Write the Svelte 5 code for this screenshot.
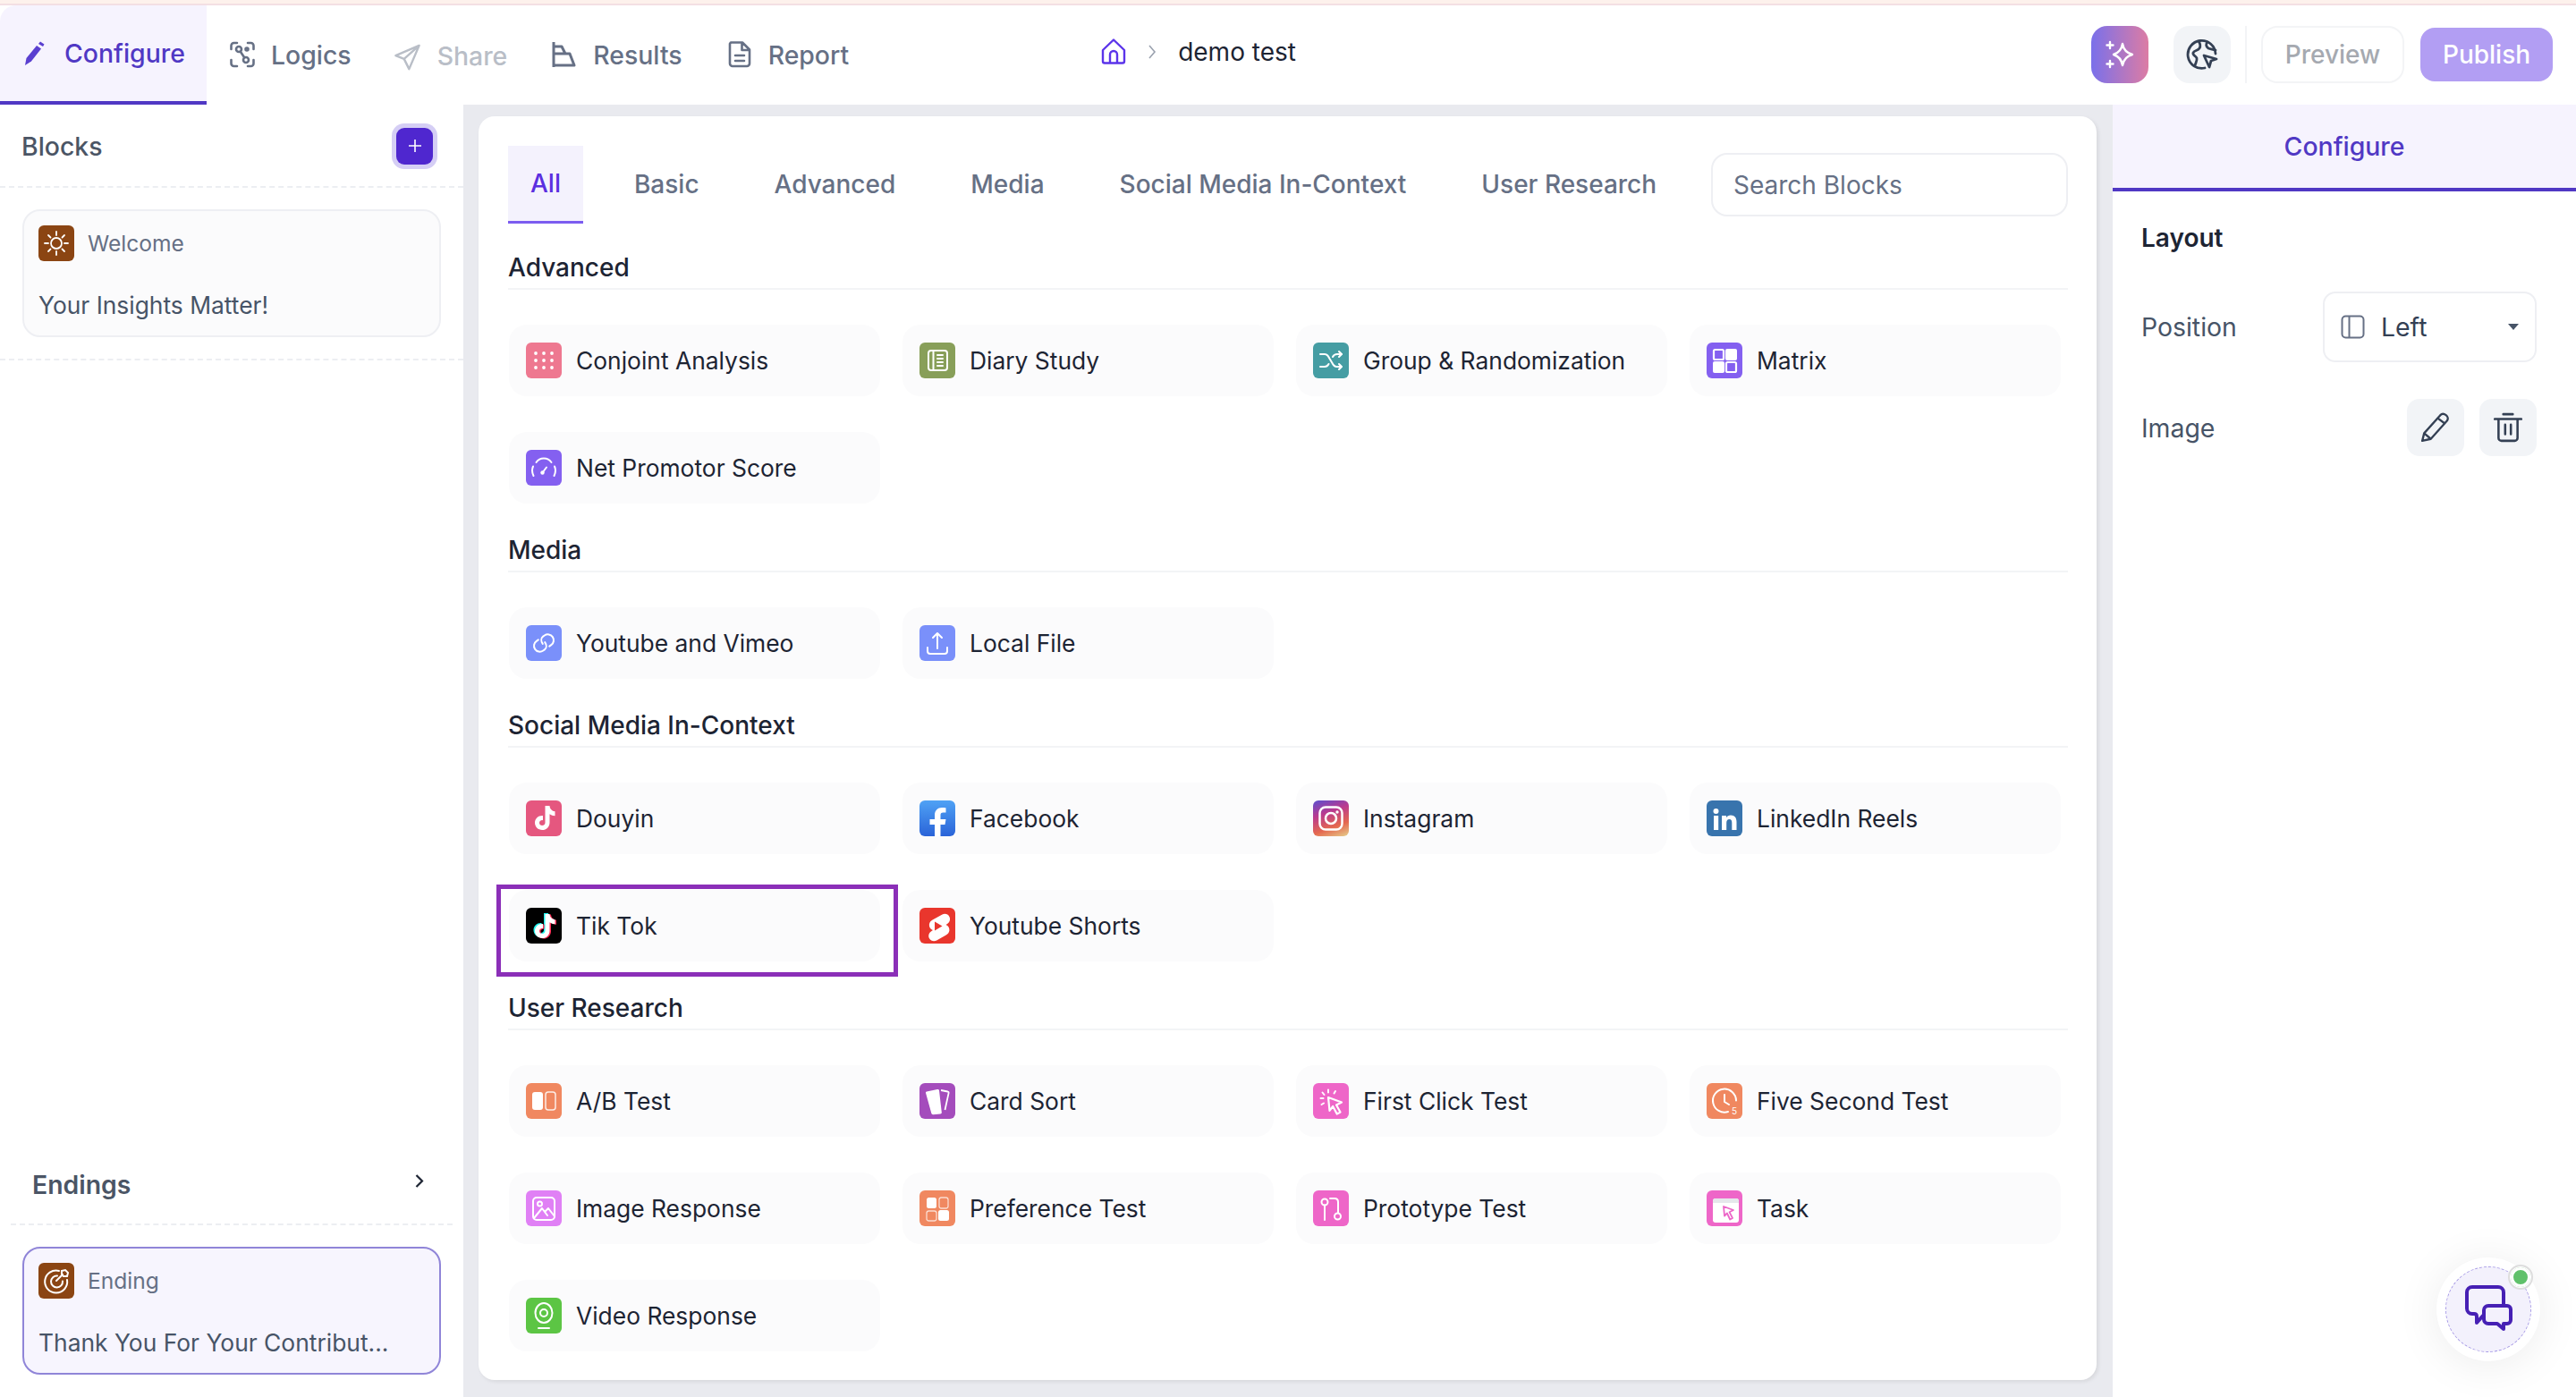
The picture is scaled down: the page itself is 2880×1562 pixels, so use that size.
<script>
  const W = 'stroke="#fff" fill="none" stroke-width="2" stroke-linecap="round" stroke-linejoin="round"';
  const note = (c, t = '') => `<path fill="${c}" ${t} d="M21.500 7h5c.3 3.600 2.600 5.900 6 6.300v4.900c-2.300 0-4.300-.7-6-1.900v9.400c0 4.700-3.700 8.300-8.300 8.300-4.500 0-8.200-3.600-8.200-8 0-4.700 4.100-8.400 9-7.900v5.100c-2.200-.5-4 1-4 2.900 0 1.700 1.400 3 3.100 3 1.800 0 3.300-1.300 3.400-3.100z" />`;
  const cursor = (x, y, c = '#fff') => `<path transform="translate(${x} ${y})" d="M0 0l11 4-4.500 2.200L10 13l-2.800 1.500-3.300-7L1 10.500z" fill="none" stroke="${c}" stroke-width="1.800" stroke-linejoin="round" />`;

  const glyphs = {
    conjoint: [11, 20, 29].flatMap((x) => [12, 20, 28].map((y) => `<circle cx="${x}" cy="${y}" r="1.900" fill="#fff" />`)).join(''),
    diary: `<g ${W}><rect x="10" y="9" width="21" height="22" rx="3" /><path d="M15.500 9v22M20 14h6M20 18h6M20 22h6M20 26h6" /></g>`,
    group: `<g ${W}><path d="M8 13h5c3 0 4 2 5.500 5l3 5c1.500 3 2.500 4 5 4h5M8 27h5c2 0 3.500-1 4.500-3M22 16c1-2 2.500-3 5-3h5" /><path d="M29 10l3 3-3 3M29 24l3 3-3 3" /></g>`,
    matrix: `<rect x="8" y="8" width="11" height="11" rx="1.500" fill="none" stroke="#fff" stroke-width="2.200" /><rect x="21" y="7" width="13" height="13" rx="2" fill="#fff" /><rect x="7" y="21" width="13" height="13" rx="2" fill="#fff" /><rect x="22" y="22" width="11" height="11" rx="1.500" fill="none" stroke="#fff" stroke-width="2.200" />`,
    nps: `<g ${W} stroke-width="2.500"><path d="M11.500 14c2-3 5-4.500 8.500-4.500s6.500 1.500 8.500 4.500" /><path d="M8.500 29c-1-2-1.500-4-1.500-6 0-1.500.3-3 1-4.500M31.500 29c1-2 1.500-4 1.500-6 0-1.500-.3-3-1-4.500" /><path d="M18.500 25.500l4.500-6" /></g><circle cx="18.500" cy="25.500" r="2.200" fill="#fff" />`,
    link: `<g ${W} stroke-width="2.200" transform="rotate(-35 20 20)"><path d="M17 13.500h-2.500a6.500 6.500 0 0 0 0 13h2c3 0 5-3 5-6.500" /><path d="M23 26.500h2.500a6.500 6.500 0 0 0 0-13h-2c-3 0-5 3-5 6.500" /></g>`,
    upload: `<g ${W} stroke-width="2.200"><path d="M20 26V9M15 14l5-5 5 5" /><path d="M9 25v4a3 3 0 0 0 3 3h16a3 3 0 0 0 3-3v-4" /></g>`,
    douyin: note('#fff', 'transform="translate(0 -1)"'),
    facebook: `<path fill="#fff" d="M17 40V27h-5.500v-6H17v-4.500C17 11 20.500 8 25 8c2 0 3.800.2 4.500.3v5.300h-3c-2.300 0-3 1.200-3 3V21h6l-1 6h-5v13z" />`,
    instagram: `<g fill="none" stroke="#fff"><rect x="7.500" y="7.500" width="25" height="25" rx="6.500" stroke-width="2.500" /><circle cx="20" cy="20" r="6" stroke-width="2.500" /></g><circle cx="27" cy="13" r="1.700" fill="#fff" />`,
    linkedin: `<circle cx="10.500" cy="12" r="3" fill="#fff" /><path fill="#fff" d="M8 17h5.200v16H8zM17 17h5v2.300c1-1.600 2.700-2.700 5-2.700 4.500 0 6.500 2.900 6.500 7.500V33h-5.200v-8c0-2.300-.8-3.900-2.900-3.900-2.300 0-3.200 1.700-3.200 4V33H17z" />`,
    tiktok: note('#25f4ee', 'transform="translate(-1.500 -1)"') + note('#fe2c55', 'transform="translate(1.500 .5)"') + note('#fff'),
    shorts: `<path fill="#fff" d="M25.500 7.500c3-1.500 6.500-.4 7.900 2.400 1.400 2.700.5 6-2 7.800l-1.900 1.200c2.600 1 4.300 3.700 3.900 6.600-.3 2.200-1.700 4-3.700 5l-10.500 6c-3 1.600-6.700.6-8.200-2.300-1.500-2.700-.6-6 1.900-7.800l2-1.300c-2.700-1-4.400-3.700-4-6.600.3-2.200 1.700-4 3.700-5z" /><path fill="#e9362d" d="M17 15.500l8.500 5-8.500 5z" />`,
    ab: `<rect x="7" y="10" width="12" height="20" rx="3" fill="#fff" /><rect x="22" y="10" width="11" height="20" rx="3" fill="none" stroke="#fff" stroke-width="1.500" opacity=".85" />`,
    cards: `<path fill="#fff" d="M8 9.500l12-2.500c1-.2 1.700.3 2 1.200l2.800 24.500c.1 1-.5 1.700-1.500 1.800l-8 .7c-1 .1-1.800-.5-2-1.400L7 11c-.2-.7.300-1.300 1-1.500z" /><path fill="none" stroke="#fff" stroke-width="1.800" d="M24 8l7.500 1.500c.8.200 1.300.8 1.100 1.600L28.500 30" />`,
    click: `<g ${W} stroke-width="1.800"><path d="M17 7.500v3M10.500 10.500l2 2.500M25 9l-1.500 2.500M8.500 17h3M9.500 24l2.500-1.500" /></g><path d="M17 16l15 5.500-6 3 4.500 8-3.800 2-4.500-8.500-3.700 4.800z" fill="none" stroke="#fff" stroke-width="2.200" stroke-linejoin="round" />`,
    clock: `<g ${W} stroke-width="2.200"><path d="M24 32a13 13 0 1 1 9-12.500" /><path d="M20 13v8l5 3" /></g><text x="28" y="35" font-size="10" font-family="Inter, sans-serif" fill="#fff">5</text>`,
    image: `<g ${W} stroke-width="1.800"><rect x="8" y="8" width="24" height="25" rx="4" /><circle cx="15.500" cy="15" r="2.500" /><path d="M9 31l9-11 6 8M21 24l4-4 7 9" /></g>`,
    pref: `<rect x="8" y="8" width="11" height="12" rx="2.500" fill="#fff" /><rect x="22" y="8" width="10" height="12" rx="2.500" fill="none" stroke="#fff" stroke-width="1.300" opacity=".7" /><rect x="8" y="23" width="11" height="11" rx="2.500" fill="none" stroke="#fff" stroke-width="1.300" opacity=".7" /><rect x="21" y="22" width="12" height="12" rx="2.500" fill="#fff" />`,
    proto: `<g ${W} stroke-width="2.200"><circle cx="13" cy="13" r="3.500" /><path d="M13 16.500V33M19 9h5c3 0 4 1.500 4 4v12" /><circle cx="27.500" cy="29" r="3.500" /></g>`,
    task: `<rect x="7" y="9" width="29" height="27" rx="3" fill="#fff" /><path d="M7 14v-2a3 3 0 0 1 3-3h23a3 3 0 0 1 3 3v2z" fill="#e5e7eb" />` + cursor(19, 18, '#ec66c8'),
    video: `<g ${W} stroke-width="2.200"><ellipse cx="20" cy="17" rx="9.500" ry="11" /><circle cx="20" cy="17" r="4" /><path d="M14 34h12" /></g>`,
  };

  const sections = [
    { title: 'Advanced', items: [
      ['Conjoint Analysis', 'conjoint', '#ee7890'], ['Diary Study', 'diary', '#889f59'],
      ['Group & Randomization', 'group', '#459da3'], ['Matrix', 'matrix', '#8460f0'],
      ['Net Promotor Score', 'nps', '#8460f0'] ] },
    { title: 'Media', items: [ ['Youtube and Vimeo', 'link', '#7a90fa'], ['Local File', 'upload', '#7a90fa'] ] },
    { title: 'Social Media In-Context', items: [
      ['Douyin', 'douyin', '#e5577f'], ['Facebook', 'facebook', 'linear-gradient(#4fa2f5, #2a63d8)'],
      ['Instagram', 'instagram', 'linear-gradient(160deg, #5a4fd0 0%, #b93a90 35%, #e5684f 70%, #e5cf8c 100%)'], ['LinkedIn Reels', 'linkedin', '#3874ad'],
      ['Tik Tok', 'tiktok', '#000'], ['Youtube Shorts', 'shorts', '#e9362d'] ] },
    { title: 'User Research', items: [
      ['A/B Test', 'ab', '#f08860'], ['Card Sort', 'cards', '#a44cbc'],
      ['First Click Test', 'click', '#ee66c8'], ['Five Second Test', 'clock', '#f08860'],
      ['Image Response', 'image', '#e080f5'], ['Preference Test', 'pref', '#f08860'],
      ['Prototype Test', 'proto', '#ee66c8'], ['Task', 'task', '#ee66c8'],
      ['Video Response', 'video', '#5cc544'] ] },
  ];

  const innerTabs = ['All', 'Basic', 'Advanced', 'Media', 'Social Media In-Context', 'User Research'];
</script>

<div class="page">
  <div class="topline"></div>

  <header class="topbar">
    <nav class="main-tabs">
      <div class="main-tab active">
        <svg class="tab-ico" viewBox="0 0 28 28"><path d="M2 27l1.500-8L15 5l5 3.500L9 22.500z" fill="#5a3fd0" /><path d="M17 3l2-2.500 4.500 3L22 6z" fill="#5a3fd0" /></svg>
        Configure
      </div>
      <div class="main-tab">
        <svg class="tab-ico" viewBox="0 0 28 28" fill="none" stroke="#667085" stroke-width="2.600" stroke-linecap="round"><path d="M1.500 8V4a3 3 0 0 1 3-3H8M20 1h3.500a3 3 0 0 1 3 3v4M1.500 20v4a3 3 0 0 0 3 3H8M26.500 20v4a3 3 0 0 1-3 3H20" /><circle cx="10" cy="8" r="3" /><circle cx="18" cy="20" r="3" /><circle cx="19" cy="8" r="1.500" /><path d="M12 11l4 6" /></svg>
        Logics
      </div>
      <div class="main-tab off">
        <svg class="tab-ico wide" viewBox="0 0 32 32" fill="none" stroke="#b9bec7" stroke-width="2.600" stroke-linejoin="round"><path d="M30 2L2 14l10 4 6 12zM30 2L12 18" /></svg>
        Share
      </div>
      <div class="main-tab">
        <svg class="tab-ico" viewBox="0 0 28 28" fill="none" stroke="#667085" stroke-width="3" stroke-linejoin="round"><path d="M2 0v28" /><path d="M2 5h9l4 8H2M2 13h18l5 13H2" /></svg>
        Results
      </div>
      <div class="main-tab">
        <svg class="tab-ico" viewBox="0 0 28 30" fill="none" stroke="#667085" stroke-width="2.600" stroke-linejoin="round" stroke-linecap="round"><path d="M4 1.500h13l8 8V25a3 3 0 0 1-3 3H6a3 3 0 0 1-3-3V3zM16.500 2v8H25M9 16h10M9 22h10" /></svg>
        Report
      </div>
    </nav>

    <div class="crumb">
      <svg width="28" height="29" viewBox="0 0 28 29" fill="none" stroke="#5b34ea" stroke-width="2.400" stroke-linejoin="round"><path d="M14 1.500L2 13v12.500a2 2 0 0 0 2 2h20a2 2 0 0 0 2-2V13zM10 27.500V18a4 4 0 0 1 8 0v9.500" /></svg>
      <svg width="10" height="16" viewBox="0 0 10 16" fill="none" stroke="#9aa1ae" stroke-width="1.600"><path d="M2 1l6 7-6 7" /></svg>
      <span>demo test</span>
    </div>

    <div class="actions">
      <button class="sq ai" aria-label="AI">
        <svg width="34" height="34" viewBox="0 0 34 34" fill="none" stroke="#fff" stroke-width="2.400" stroke-linecap="round" stroke-linejoin="round"><path d="M20 5c1 6 4 10 11 12-7 2-10 6-11 12-1-6-4-10-10-12 6-2 9-6 10-12z" /><path d="M6 3v7M2.500 6.500h7M6 24v7M2.500 27.500h7" /></svg>
      </button>
      <button class="sq" aria-label="Globe">
        <svg width="36" height="36" viewBox="0 0 36 36" fill="none" stroke="#344054" stroke-width="2.800" stroke-linecap="round" stroke-linejoin="round"><path d="M33 17a15.500 15.500 0 1 0-12 16" /><path d="M14 3c2 3 3 5 1 8-2 3-6 2-7 5s3 3 4 6c.7 2.500-1 5-2 8M24 4c-2 2-2 5 1 7 2 1 5 1 8 2" /><path d="M20 19l14 4-6 2-2 7z" /></svg>
      </button>
      <div class="vsep"></div>
      <button class="preview">Preview</button>
      <button class="publish">Publish</button>
    </div>
  </header>

  <div class="body">
    <aside class="left">
      <div class="left-head">
        <span>Blocks</span>
        <button class="plus" aria-label="Add">
          <svg width="14" height="14" viewBox="0 0 14 14" stroke="#fff" stroke-width="1.600"><path d="M7 0v14M0 7h14" /></svg>
        </button>
      </div>

      <div class="welcome-wrap">
        <div class="block">
          <div class="block-top">
            <span class="brown">
              <svg width="40" height="40" viewBox="0 0 40 40" fill="none" stroke="#fff" stroke-width="1.800" stroke-linecap="round"><circle cx="20" cy="20" r="6" /><path d="M20 7v4M20 29v4M7 20h4M29 20h4M11 11l2.500 2.500M26.500 26.500L29 29M11 29l2.500-2.500M26.500 13.500L29 11" /></svg>
            </span>
            Welcome
          </div>
          <div class="block-title">Your Insights Matter!</div>
        </div>
      </div>

      <div class="grow"></div>

      <div class="endings-head">
        <span>Endings</span>
        <svg width="10" height="15" viewBox="0 0 10 15" fill="none" stroke="#1d2433" stroke-width="2.200"><path d="M1.500 1l6.500 6.500L1.500 14" /></svg>
      </div>
      <div class="endings-list">
        <div class="block selected">
          <div class="block-top">
            <span class="brown">
              <svg width="40" height="40" viewBox="0 0 40 40" fill="none" stroke="#fff" stroke-width="2" stroke-linecap="round"><path d="M23 9a12.500 12.500 0 1 0 9 10" /><path d="M21 14.500a6.500 6.500 0 1 0 6 6" /><path d="M20 20l7-7M26 9l4-1 3 3-1 4-4 0-2-2z" /></svg>
            </span>
            Ending
          </div>
          <div class="block-title">Thank You For Your Contribut...</div>
        </div>
      </div>
    </aside>

    <main class="center">
      <div class="panel">
        <div class="tabs-row">
          {#each innerTabs as tab, i}
            <div class="inner-tab" class:on={i === 0}>{tab}</div>
          {/each}
          <input class="search" placeholder="Search Blocks" />
        </div>

        {#each sections as sec}
          <h3 class="sec-title">{sec.title}</h3>
          <div class="grid">
            {#each sec.items as [label, icon, color]}
              <div class="item">
                <span class="tile" style="background: {color}">
                  <svg width="40" height="40" viewBox="0 0 40 40">{@html glyphs[icon]}</svg>
                </span>
                {label}
                {#if label === 'Tik Tok'}
                  <div class="highlight"></div>
                {/if}
              </div>
            {/each}
          </div>
        {/each}
      </div>
    </main>

    <aside class="right">
      <div class="right-tab">Configure</div>
      <div class="right-body">
        <div class="layout-title">Layout</div>
        <div class="field">
          <span>Position</span>
          <div class="select">
            <svg width="27" height="27" viewBox="0 0 27 27" fill="none" stroke="#667085" stroke-width="2"><rect x="1.500" y="1.500" width="24" height="24" rx="4" /><path d="M9.500 1.500v24" /></svg>
            <b>Left</b>
            <i class="caret"></i>
          </div>
        </div>
        <div class="field image-field">
          <span>Image</span>
          <div class="image-btns">
            <button class="sq small" aria-label="Edit">
              <svg width="34" height="34" viewBox="0 0 32 32" fill="none" stroke="#344054" stroke-width="2.200" stroke-linejoin="round"><path d="M2 30l2-8L21 3c1.500-1.500 4-1.500 6 0s2.500 4 1 6L11 28z" /><path d="M4 22l7 6M18 6l8 6" /></svg>
            </button>
            <button class="sq small" aria-label="Delete">
              <svg width="32" height="34" viewBox="0 0 30 32" fill="none" stroke="#344054" stroke-width="2.400" stroke-linecap="round"><path d="M1 7h28M10 2h10M5 7v20a3 3 0 0 0 3 3h14a3 3 0 0 0 3-3V7M12 13v10M18 13v10" /></svg>
            </button>
          </div>
        </div>
      </div>
    </aside>
  </div>

  <div class="chat">
    <div class="chat-in">
      <svg width="56" height="56" viewBox="0 0 56 56" fill="none" stroke="#4620b4" stroke-width="4" stroke-linecap="round" stroke-linejoin="round"><path d="M45 22V9a6 6 0 0 0-6-6H10a6 6 0 0 0-6 6v18a6 6 0 0 0 6 6h2q3 0 3 3v7l7-8" /><path d="M28 24h21a4 4 0 0 1 4 4v12a4 4 0 0 1-4 4h-4v6l-7-6H28a5 5 0 0 1-5-5V29a5 5 0 0 1 5-5z" /></svg>
    </div>
    <span class="dot"></span>
  </div>
</div>

<style>
  :global(html) {
    overflow: hidden;
  }

  :global(body) {
    margin: 0;
    background: #fff;
    overflow: hidden;
  }

  .page {
    position: relative;
    display: flex;
    flex-direction: column;
    height: 1562px;
    overflow: hidden;
    font-family: Inter, "Noto Sans", sans-serif;
    color: #1d2433;
  }

  .topline {
    height: 6px;
    background: linear-gradient(#fdf1ec 0 4px, #f3dfe3 4px 6px);
  }

  button {
    font-family: inherit;
    border: none;
    padding: 0;
  }

  .topbar {
    display: flex;
    align-items: center;
    height: 111px;
    flex: none;
  }

  .main-tabs {
    display: flex;
    height: 100%;
  }

  .main-tab {
    display: flex;
    align-items: center;
    gap: 18px;
    padding: 0 25px;
    font-size: 28.4px;
    font-weight: 500;
    color: #667085;
    margin-top: -1px;
  }

  .main-tab.active {
    width: 231px;
    box-sizing: border-box;
    margin-top: 0;
    margin-right: 1px;
    padding: 0 26px;
    color: #5038c4;
    background: #f6f3fe;
    border-bottom: 4px solid #5038c4;
    border-top-left-radius: 18px;
  }

  .main-tab.off {
    margin-top: 1px;
    margin-left: -3px;
    color: #b9bec7;
  }

  .tab-ico {
    width: 28px;
    height: 30px;
    flex: none;
  }

  .tab-ico.wide {
    width: 31px;
    margin-top: 4px;
  }

  .crumb {
    display: flex;
    align-items: center;
    gap: 24px;
    margin-left: 257px;
    margin-top: -8px;
    font-size: 28px;
    color: #1d2433;
  }

  .actions {
    display: flex;
    align-items: center;
    margin-left: auto;
    padding-right: 26px;
    margin-top: -1px;
  }

  .sq {
    display: flex;
    align-items: center;
    justify-content: center;
    width: 64px;
    height: 64px;
    background: #f2f4f7;
    border-radius: 18px;
  }

  .sq.ai {
    background: linear-gradient(90deg, #7a70ea, #dc7ca4);
    margin-right: 28px;
  }

  .vsep {
    width: 2px;
    height: 64px;
    background: #f3f4f6;
    margin: 0 16px;
  }

  .preview {
    width: 160px;
    height: 64px;
    background: #fff;
    border: 2px solid #f3f4f6;
    border-radius: 18px;
    font-size: 28px;
    font-weight: 500;
    color: #a5a9b0;
  }

  .publish {
    width: 148px;
    height: 60px;
    margin-left: 18px;
    background: #b29ef3;
    border-radius: 16px;
    font-size: 28px;
    font-weight: 500;
    color: #fff;
  }

  .body {
    display: flex;
    flex: 1;
    min-height: 0;
    background: #e9eaef;
  }

  .left {
    display: flex;
    flex-direction: column;
    width: 518px;
    background: #fff;
    flex: none;
  }

  .left-head {
    display: flex;
    align-items: center;
    justify-content: space-between;
    height: 90px;
    padding: 0 34px 0 24px;
    border-bottom: 2px dashed #eceef2;
    font-size: 28.4px;
    font-weight: 500;
    color: #4b5565;
    flex: none;
    margin-top: 1px;
  }

  .plus {
    display: flex;
    align-items: center;
    justify-content: center;
    width: 41px;
    height: 41px;
    background: #4f27cf;
    border-radius: 9px;
    box-shadow: 0 0 0 5px #d5cef5;
  }

  .welcome-wrap {
    padding: 24px 25px;
    border-bottom: 2px dashed #eceef2;
  }

  .block {
    box-sizing: border-box;
    height: 143px;
    padding: 16px;
    background: #fbfbfc;
    border: 2px solid #eeeff3;
    border-radius: 20px;
  }

  .block-top {
    display: flex;
    align-items: center;
    gap: 15px;
    font-size: 24.6px;
    color: #667085;
  }

  .brown {
    display: flex;
    width: 40px;
    height: 40px;
    background: #8b4513;
    border-radius: 6px;
  }

  .block-title {
    margin-top: 34px;
    font-size: 26.4px;
    line-height: 30px;
    font-weight: 400;
    color: #475467;
    white-space: nowrap;
  }

  .grow {
    flex: 1;
  }

  .endings-head {
    display: flex;
    align-items: center;
    justify-content: space-between;
    box-sizing: border-box;
    height: 90px;
    margin: 0 12px;
    padding: 0 32px 0 24px;
    border-bottom: 2px dashed #eceef2;
    font-size: 28.4px;
    font-weight: 600;
    color: #4b5565;
  }

  .endings-head svg {
    margin-top: -8px;
  }

  .endings-list {
    padding: 24px 25px 25px;
  }

  .selected {
    background: #f7f5fe;
    border-color: #9085d8;
  }

  .center {
    flex: 1;
    min-width: 0;
    padding: 13px 18px 19px 17px;
  }

  .panel {
    position: relative;
    box-sizing: border-box;
    height: 100%;
    padding: 33px 32px 0 33px;
    background: #fff;
    border-radius: 18px;
    box-shadow: 2px 2px 4px rgba(0, 0, 0, 0.08);
  }

  .tabs-row {
    display: flex;
    align-items: center;
    gap: 34px;
    height: 87px;
    margin-bottom: 28px;
  }

  .inner-tab {
    display: flex;
    align-items: center;
    box-sizing: border-box;
    height: 87px;
    padding: 0 25px;
    font-size: 28px;
    font-weight: 500;
    color: #667085;
    white-space: nowrap;
    margin-top: -2px;
  }

  .inner-tab.on {
    margin-top: 0;
    margin-right: -2px;
    color: #5b2fe0;
    background: #f4f2fd;
    border-bottom: 3px solid #7c5cf0;
  }

  .search {
    box-sizing: border-box;
    flex: none;
    width: 399px;
    height: 71px;
    margin-left: auto;
    padding: 0 23px;
    border: 2px solid #eeeff3;
    border-radius: 18px;
    font-family: inherit;
    font-size: 28px;
    outline: none;
    background: #fff;
  }

  .search::placeholder {
    color: #667085;
    opacity: 1;
  }

  .sec-title {
    display: flex;
    align-items: center;
    box-sizing: border-box;
    height: 46px;
    margin: 0;
    padding-bottom: 2px;
    border-bottom: 2px solid #f3f4f6;
    font-size: 28px;
    font-weight: 500;
    color: #1d2433;
  }

  .grid {
    display: grid;
    grid-template-columns: repeat(4, 415px);
    gap: 40px 25px;
    margin: 39px 0 31px 1px;
  }

  .item {
    position: relative;
    display: flex;
    align-items: center;
    gap: 16px;
    height: 80px;
    padding-left: 19px;
    background: #fbfbfc;
    border-radius: 20px;
    font-size: 26.4px;
    color: #1d2433;
  }

  .tile {
    display: flex;
    width: 40px;
    height: 40px;
    border-radius: 6px;
    overflow: hidden;
  }

  .highlight {
    position: absolute;
    inset: -6px -20px -17px -14px;
    border: 5px solid #8b2fb8;
    pointer-events: none;
  }

  .right {
    width: 518px;
    background: #fff;
    flex: none;
  }

  .right-tab {
    display: flex;
    align-items: center;
    justify-content: center;
    box-sizing: border-box;
    height: 97px;
    background: #f6f3fe;
    border-bottom: 4px solid #5038c4;
    font-size: 28.4px;
    font-weight: 500;
    color: #5038c4;
  }

  .right-body {
    padding: 32px 44px 0 32px;
  }

  .layout-title {
    height: 40px;
    line-height: 40px;
    font-size: 28px;
    font-weight: 600;
    color: #1d2433;
  }

  .field {
    display: flex;
    align-items: center;
    justify-content: space-between;
    margin-top: 40px;
    font-size: 28.4px;
    color: #475467;
  }

  .select {
    display: flex;
    align-items: center;
    gap: 18px;
    box-sizing: border-box;
    width: 239px;
    height: 79px;
    padding: 0 18px 0 18px;
    border: 2px solid #eeeff3;
    border-radius: 14px;
  }

  .select b {
    font-weight: 400;
    color: #344054;
    flex: 1;
  }

  .caret {
    width: 0;
    height: 0;
    border: 6px solid transparent;
    border-top: 7px solid #475467;
    border-bottom: 0;
  }

  .image-field {
    margin-top: 41px;
  }

  .image-btns {
    display: flex;
    gap: 17px;
  }

  .sq.small {
    width: 64px;
    height: 64px;
    border-radius: 14px;
  }

  .chat {
    position: absolute;
    left: 2724px;
    top: 1406px;
    display: flex;
    align-items: center;
    justify-content: center;
    width: 116px;
    height: 116px;
    background: #fff;
    border-radius: 50%;
    box-shadow: 0 4px 50px rgba(0, 0, 0, 0.08);
  }

  .chat-in {
    display: flex;
    align-items: center;
    justify-content: center;
    box-sizing: border-box;
    width: 96px;
    height: 96px;
    background: #f3f1fc;
    border: 1px dashed #a79ae6;
    border-radius: 50%;
  }

  .dot {
    position: absolute;
    left: 81px;
    top: 9px;
    box-sizing: border-box;
    width: 26px;
    height: 26px;
    background: #5fc16a;
    border: 2px solid #fff;
    outline: 2px solid #ddd;
    outline-offset: -1px;
    border-radius: 50%;
    background-clip: padding-box;
    box-shadow: inset 0 0 0 3px #fff;
  }
</style>
